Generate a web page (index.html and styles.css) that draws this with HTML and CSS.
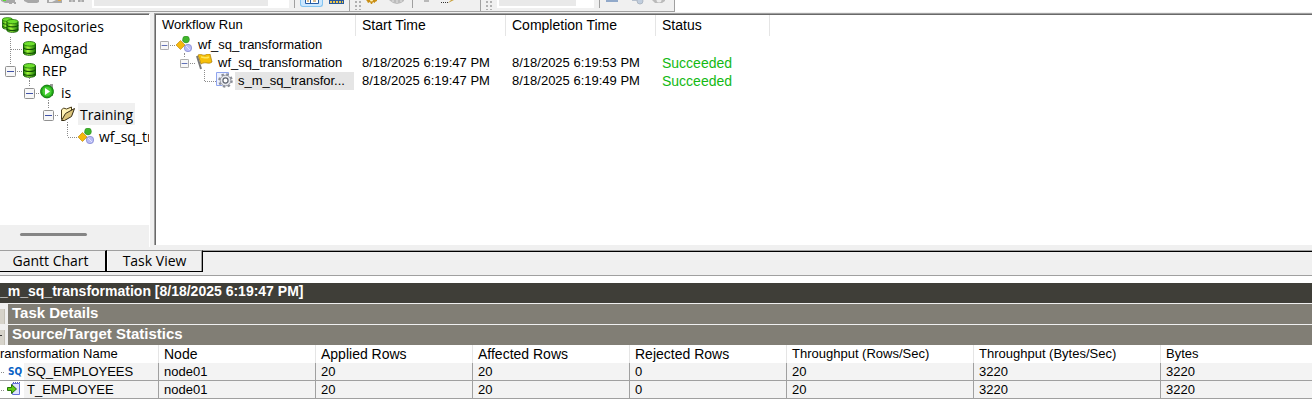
FILE: index.html
```html
<!DOCTYPE html>
<html lang="en">
<head>
<meta charset="utf-8">
<title>Workflow Monitor</title>
<link rel="stylesheet" href="styles.css">
</head>
<body>
<svg class="defs" aria-hidden="true">
  <defs>
    <linearGradient id="green" x1="0" x2="1"><stop offset="0" stop-color="#2c9a08"/><stop offset=".35" stop-color="#a4f83c"/><stop offset="1" stop-color="#167a04"/></linearGradient>
    <symbol id="db" viewBox="0 0 13 15"><path d="M.5 3v9c0 3 12 3 12 0V3z" fill="url(#green)" stroke="#176008"/><path d="M.5 6.500c1 2.600 11 2.600 12 0M.5 10.500c1 2.500 11 2.500 12 0" fill="none" stroke="#124c06" stroke-width="1.100"/><ellipse cx="6.500" cy="2.800" rx="6" ry="2.300" fill="#6ee02c" stroke="#1b6a08" stroke-width=".8"/></symbol>
    <symbol id="box" viewBox="0 0 11 11"><rect x=".5" y=".5" width="10" height="10" rx="1" fill="#f7f7f7" stroke="#919191"/><path d="M2 5.500h7" stroke="#4052a8"/></symbol>
    <symbol id="flow" viewBox="0 0 16 16"><path d="M6 5l3-2M7 9l4 2" stroke="#999"/><path d="M4.500 4.500L9 9l-4.500 4.500L0 9z" fill="#f5b80c" stroke="#b88000" stroke-width=".6"/><circle cx="10" cy="3.500" r="3.400" fill="#3fb62c" stroke="#2a861c" stroke-width=".5"/><circle cx="12" cy="12" r="3.700" fill="#b9bcf5" stroke="#7e84cf" stroke-width=".7"/><path d="M10 10l4 4" stroke="#e4e5ff"/></symbol>
    <symbol id="gear" viewBox="0 0 14 14"><circle cx="7" cy="7" r="5.600" fill="#fff" stroke="#8b8f98" stroke-width="2.400" stroke-dasharray="2.200 2.200"/><circle cx="7" cy="7" r="5" fill="#e6e8ee" stroke="#8b8f98" stroke-width=".8"/><circle cx="7" cy="7" r="2.400" fill="#fff" stroke="#5e636e" stroke-width="1.100"/></symbol>
  </defs>
</svg>

<header class="toolbars">
  <div class="toolbar">
    <button class="tool" aria-label="Connect"><svg width="18" height="12"><path d="M1 0h14v2h1v2h-2v-1h-2v1H9V3H5L1 1z" fill="#a8a8a8"/><path d="M3 .5h3" stroke="#55e02c"/></svg></button>
    <button class="tool" aria-label="Disconnect"><svg width="18" height="12"><path d="M1 0h15v2l-2 1H5L1 1z" fill="#a8a8a8"/></svg></button>
    <button class="tool" aria-label="Print"><svg width="18" height="12"><path d="M1 0h15v3H1z" fill="#aaa"/><path d="M3 0h7l-4 2H3z" fill="#eee"/><path d="M12 .5h3" stroke="#e5a83c"/></svg></button>
    <button class="tool" aria-label="Find"><svg width="18" height="12"><path d="M0 0h6v2H0zM9 0h6v2H9z" fill="#aaa"/><path d="M3 0v2M12 0v2" stroke="#ddd"/></svg></button>
    <select class="picker" aria-label="Find text"><option></option></select>
    <span class="divider"></span>
    <button class="tool selected" aria-label="Task view"><svg width="18" height="12"><path d="M2.500 0v3.500h13V0" fill="#fff" stroke="#235ba5"/><path d="M7.500 0v3" stroke="#235ba5"/><path d="M4 1h2M10 1h3" stroke="#b77f20"/></svg></button>
    <button class="tool" aria-label="Gantt view"><svg width="18" height="12"><path d="M1 0h15v4H1z" fill="#28599b"/><path d="M2 2h13" stroke="#eec64a" stroke-width="2" stroke-dasharray="2 1"/></svg></button>
  </div>
  <div class="toolbar">
    <span class="grip"></span>
    <button class="tool" aria-label="Start"><svg width="18" height="12"><path d="M0 0h11v1l-2 1v1l-2-1-1 2H5L4 2 2 3 1 1z" fill="#c98e14"/><circle cx="5.500" cy="0" r="1.500" fill="#fff0b0"/></svg></button>
    <button class="tool" aria-label="Stop"><svg width="18" height="12"><path d="M0 0h15v1l-3 2-4 1-4-1z" fill="#bcbcbc"/><path d="M4 0v2M8 0v3M12 0v2" stroke="#e4e4e4"/></svg></button>
    <span class="divider"></span>
    <button class="tool" aria-label="Pause"><svg width="18" height="12"><path d="M6 0h5v2H6z" fill="#b9b9b9"/></svg></button>
    <button class="tool" aria-label="Edit"><svg width="18" height="12"><path d="M0 2.500h7" stroke="#333" stroke-dasharray="1 1"/><path d="M7 3l3-3h3z" fill="#c9a340"/></svg></button>
  </div>
  <div class="toolbar">
    <span class="grip"></span>
    <select class="picker short" aria-label="Time window"><option></option></select>
    <span class="divider"></span>
    <button class="tool" aria-label="Filter"><svg width="18" height="12"><path d="M1 0h12v2H1z" fill="#91a9ca"/></svg></button>
    <button class="tool" aria-label="Servers"><svg width="18" height="12"><path d="M4 0h5v1H4z" fill="#b7c1ce"/><circle cx="12" cy="1" r="3" fill="#c1cede" stroke="#aeb8c4"/></svg></button>
    <button class="tool" aria-label="Settings"><svg width="18" height="12"><path d="M1 0h13v1l-3 2H8L4 3z" fill="#bbb"/><circle cx="8" cy="0" r="2.500" fill="#ececec"/></svg></button>
  </div>
</header>

<main class="workspace">
  <nav class="navigator" aria-label="Navigator">
    <ul class="tree">
      <li class="node"><svg width="21" height="22"><use href="#db" x="2" y="2" width="11" height="13"/><use href="#db" x="6" y="4" width="13" height="14"/></svg><span class="label">Repositories</span></li>
      <li class="node"><svg width="40" height="22"><path class="dots" d="M10.500 0v22M11 12.500h11"/><use href="#db" x="23" y="4" width="13" height="15"/></svg><span class="label">Amgad</span></li>
      <li class="node"><svg width="40" height="22"><path class="dots" d="M10.500 0v6M17 12.500h5M29.500 19v3"/><use href="#box" x="5" y="7" width="11" height="11"/><use href="#db" x="23" y="4" width="13" height="15"/></svg><span class="label">REP</span></li>
      <li class="node"><svg width="59" height="22"><path class="dots" d="M29.500 0v6M36 12.500h4M48.500 19v3"/><use href="#box" x="24" y="7" width="11" height="11"/><path d="M50 3h3v12h-3z" fill="#999"/><circle cx="47" cy="10.500" r="6.400" fill="#23ad19" stroke="#157b0e"/><circle cx="47" cy="10.500" r="4.500" fill="#49cf35"/><path d="M45 7v7l5-3.500z" fill="#fff"/></svg><span class="label">is</span></li>
      <li class="node"><svg width="78" height="22"><path class="dots" d="M48.500 0v6M55 12.500h4M67.500 19v3"/><use href="#box" x="43" y="7" width="11" height="11"/><path d="M61.500 16.500V7l2-2 3 1 5-2v4" fill="#fff2b5" stroke="#4a3c18"/><path d="M61.500 17.500l4-7 9-5-3 8-7 4z" fill="#dbc47a" stroke="#352b13"/></svg><span class="label current">Training</span></li>
      <li class="node"><svg width="97" height="22"><path class="dots" d="M67.500 0v12M68 12.500h10"/><use href="#flow" x="78" y="3" width="16" height="16"/></svg><span class="label">wf_sq_transformation</span></li>
    </ul>
    <div class="scrollbar"><span class="thumb"></span></div>
  </nav>
  <section class="runs">
    <table class="run-table">
      <colgroup><col class="c-run"><col class="c-time"><col class="c-time"><col class="c-status"><col></colgroup>
      <thead><tr><th class="compact">Workflow Run</th><th>Start Time</th><th>Completion Time</th><th>Status</th><td></td></tr></thead>
      <tbody>
        <tr><td class="tree-cell"><div class="branch"><svg width="39" height="18"><path class="dots" d="M14 9.500h6M28.500 17v1"/><use href="#box" x="4" y="5" width="9" height="9"/><use href="#flow" x="20" y="0" width="16" height="16"/></svg><span class="run">wf_sq_transformation</span></div></td><td></td><td></td><td></td><td></td></tr>
        <tr><td class="tree-cell"><div class="branch"><svg width="59" height="18"><path class="dots" d="M28.500 0v4M34 9.500h6M48.500 16v2"/><use href="#box" x="24" y="5" width="9" height="9"/><path d="M41 2l4 13" stroke="#777" stroke-width="2"/><path d="M42 1c4-2 5 2 9-1h3l2 8c-4 3-6-1-11 2z" fill="#f6bf0a" stroke="#a47805" stroke-width=".7"/><path d="M45 3c3 0 4 2 8 0" fill="none" stroke="#ffe75b" stroke-width="1.500"/></svg><span class="run">wf_sq_transformation</span></div></td><td>8/18/2025 6:19:47 PM</td><td>8/18/2025 6:19:53 PM</td><td class="ok">Succeeded</td><td></td></tr>
        <tr><td class="tree-cell"><div class="branch"><svg width="79" height="18"><path class="dots" d="M48.500 0v9M49 9.500h11"/><path d="M60.500.5h12v13h-12z" fill="#eef2ff" stroke="#8fa4ee"/><use href="#gear" x="62" y="1" width="15" height="15"/></svg><span class="run current">s_m_sq_transfor...</span></div></td><td>8/18/2025 6:19:47 PM</td><td>8/18/2025 6:19:49 PM</td><td class="ok">Succeeded</td><td></td></tr>
      </tbody>
    </table>
  </section>
</main>

<div class="tabs" role="tablist">
  <button class="tab" role="tab" aria-selected="false">Gantt Chart</button>
  <button class="tab" role="tab" aria-selected="true">Task View</button>
  <span class="tab-rest"></span>
</div>

<section class="details">
  <h1 class="title">_m_sq_transformation [8/18/2025 6:19:47 PM]</h1>
  <div class="group"><button class="toggle" aria-label="Expand Task Details"></button><h2 class="group-name">Task Details</h2></div>
  <div class="group"><button class="toggle open" aria-label="Collapse Source/Target Statistics"></button><h2 class="group-name">Source/Target Statistics</h2></div>
  <table class="stats">
    <colgroup><col class="s-name"><col class="s-col"><col class="s-col"><col class="s-col"><col class="s-col"><col class="s-wide"><col class="s-wide"><col></colgroup>
    <thead><tr><th class="first compact">ransformation Name</th><th>Node</th><th>Applied Rows</th><th>Affected Rows</th><th>Rejected Rows</th><th class="compact">Throughput (Rows/Sec)</th><th class="compact">Throughput (Bytes/Sec)</th><th class="compact">Bytes</th></tr></thead>
    <tbody>
      <tr><td class="tree-cell"><div class="branch"><span class="mark"><svg width="8" height="17"><path class="dots" d="M1 9.500h4"/></svg><b class="sq">SQ</b></span><span class="source">SQ_EMPLOYEES</span></div></td><td>node01</td><td>20</td><td>20</td><td>0</td><td>20</td><td>3220</td><td>3220</td></tr>
      <tr><td class="tree-cell"><div class="branch"><span class="mark"><svg width="24" height="17"><path class="dots" d="M1 9.500h4"/><path d="M12.500 2.500h7v11h-7z" fill="#dfe4ff" stroke="#6570d8"/><path d="M13 1.500h7" stroke="#5058bd" stroke-dasharray="1 1"/><path d="M7.500 6.500h4v-3l5 4.500-5 4.500v-3h-4z" fill="#62cc16" stroke="#277409"/></svg></span><span class="source">T_EMPLOYEE</span></div></td><td>node01</td><td>20</td><td>20</td><td>0</td><td>20</td><td>3220</td><td>3220</td></tr>
    </tbody>
  </table>
</section>
</body>
</html>
```
FILE: styles.css
```css
* { box-sizing: border-box; }
body { margin: 0; background: #fff; color: #000; font: 14px/18px "Liberation Sans", Arial, sans-serif; }
svg { display: block; flex: none; }
button { margin: 0; padding: 0; border: 0; background: none; font: inherit; color: inherit; }
table { width: 100%; table-layout: fixed; border-collapse: separate; border-spacing: 0; }
.defs { position: absolute; width: 0; height: 0; }
.dots { fill: none; stroke: #8c8c8c; stroke-dasharray: 1 1; shape-rendering: crispEdges; }

.toolbars { display: flex; height: 13px; overflow: hidden; border-bottom: 1px solid #f0f0f0; }
.toolbar { display: flex; gap: 5px; height: 12px; background: #f0f0f0; border-right: 1px solid #a0a0a0; border-bottom: 1px solid #a0a0a0; }
.toolbar:nth-child(1) { width: 350px; }
.toolbar:nth-child(2) { width: 131px; }
.toolbar:nth-child(3) { width: 194px; }
.tool { width: 18px; height: 12px; flex: none; }
.tool.selected { width: 23px; height: 7px; padding-left: 2px; background: #cce8ff; border: 1px solid #84c4f0; border-top: 0; border-radius: 0 0 3px 3px; overflow: hidden; }
.picker { appearance: none; width: 197px; height: 8px; padding: 0; background: linear-gradient(90deg, #e9e9e9 174px, #fff 174px); border: 2px solid #fff; border-top: 0; border-radius: 0; }
.picker.short { width: 97px; background: linear-gradient(90deg, #e9e9e9 77px, #fff 77px); }
.divider { width: 1px; height: 8px; background: #a0a0a0; }
.grip { width: 7px; height: 10px; margin-left: 4px; background: radial-gradient(circle, #b0b0b0 1px, transparent 1px) 0 0 / 4px 4px; }

.workspace { display: flex; height: 234px; background: #f0f0f0; }
.navigator { display: flex; flex-direction: column; width: 150px; flex: none; border-top: 1px solid #a0a0a0; border-right: 1px solid #fff; box-shadow: inset 0 1px #696969; margin-right: 4px; padding-top: 1px; }
.tree { flex: 1; margin: 0; padding: 0; list-style: none; overflow: hidden; background: #fff; font: 14px/22px "Open Sans", "Noto Sans", sans-serif; }
.node { display: flex; height: 22px; white-space: nowrap; }
.label { padding: 1px 2px 0; line-height: 21px; }
.label.current { background: #f0f0f0; }
.scrollbar { height: 22px; padding: 8px 0 0 20px; background: #f0f0f0; }
.thumb { display: block; width: 67px; height: 3px; border-radius: 2px; background: #858585; }
.runs { flex: 1; min-width: 0; margin-bottom: 2px; background: #fff; border-left: 1px solid #a0a0a0; border-top: 1px solid #a0a0a0; box-shadow: inset 1px 1px #696969; padding: 1px 0 0 1px; }
.run-table th, .run-table td { padding: 0 0 0 6px; height: 18px; text-align: left; font-size: 13px; font-weight: 400; line-height: 18px; white-space: nowrap; }
.run-table th { height: 21px; padding-bottom: 1px; font-size: 14px; border-right: 1px solid #e5e5e5; }
.run-table .tree-cell, .stats .tree-cell { padding: 0; }
.run-table .compact, .stats .compact { font-size: 13px; }
.c-run { width: 200px; }
.c-time { width: 150px; }
.c-status { width: 114px; }
.branch { display: flex; }
.run { padding: 0 3px; }
.run.current { width: 119px; background: #e5e5e5; }
.run-table .ok { color: #13b913; font-size: 14px; }

.tabs { display: flex; height: 29px; padding-top: 3px; background: #f0f0f0; border-bottom: 1px solid #a0a0a0; font: 14px/20px "Open Sans", "Noto Sans", sans-serif; }
.tab { height: 22px; border-top: 1px solid #a0a0a0; border-right: 2px solid #000; border-bottom: 1px solid #000; }
.tab:nth-child(1) { width: 107px; padding-right: 4px; }
.tab:nth-child(2) { width: 96px; border-right-width: 1px; box-shadow: inset 1px 0 #fff, inset -1px 0 #a0a0a0; }
.tab-rest { flex: 1; height: 2px; border-top: 1px solid #a0a0a0; border-bottom: 1px solid #000; }

.details { padding-top: 7px; background: #fff; }
.title, .group-name { margin: 0; font-size: 14px; font-weight: 700; line-height: 17px; color: #fff; white-space: nowrap; }
.title { height: 20px; background: #3f3e38; }
.group { display: flex; align-items: flex-end; gap: 3px; padding-top: 1px; background: #f0f0f0; }
.toggle { width: 5px; height: 15px; background: #d6d3ca; border-right: 1px solid #c3c0b6; }
.toggle.open { background: linear-gradient(#333, #333) 0 5px / 2px 1px no-repeat #d6d3ca; }
.group-name { flex: 1; height: 20px; padding-left: 4px; font-size: 15px; background: #817e75; }
.stats th, .stats td { padding: 0 0 0 5px; text-align: left; font-weight: 400; white-space: nowrap; }
.stats th { height: 18px; border-right: 1px solid #e5e5e5; }
.stats th.first { padding-left: 0; }
.stats td { height: 18px; font-size: 13px; line-height: 17px; background: #f3f3f3; border-right: 1px solid #a0a0a0; border-bottom: 1px solid #a0a0a0; }
.stats th:last-child, .stats td:last-child { border-right: 0; }
.s-name { width: 159px; }
.s-col { width: 157px; }
.s-wide { width: 187px; }
.mark { display: flex; width: 24px; background: #fff; }
.sq { color: #0a62c4; font: 700 10px/17px "DejaVu Sans Condensed", "DejaVu Sans", sans-serif; }
.source { padding-left: 3px; }
```
